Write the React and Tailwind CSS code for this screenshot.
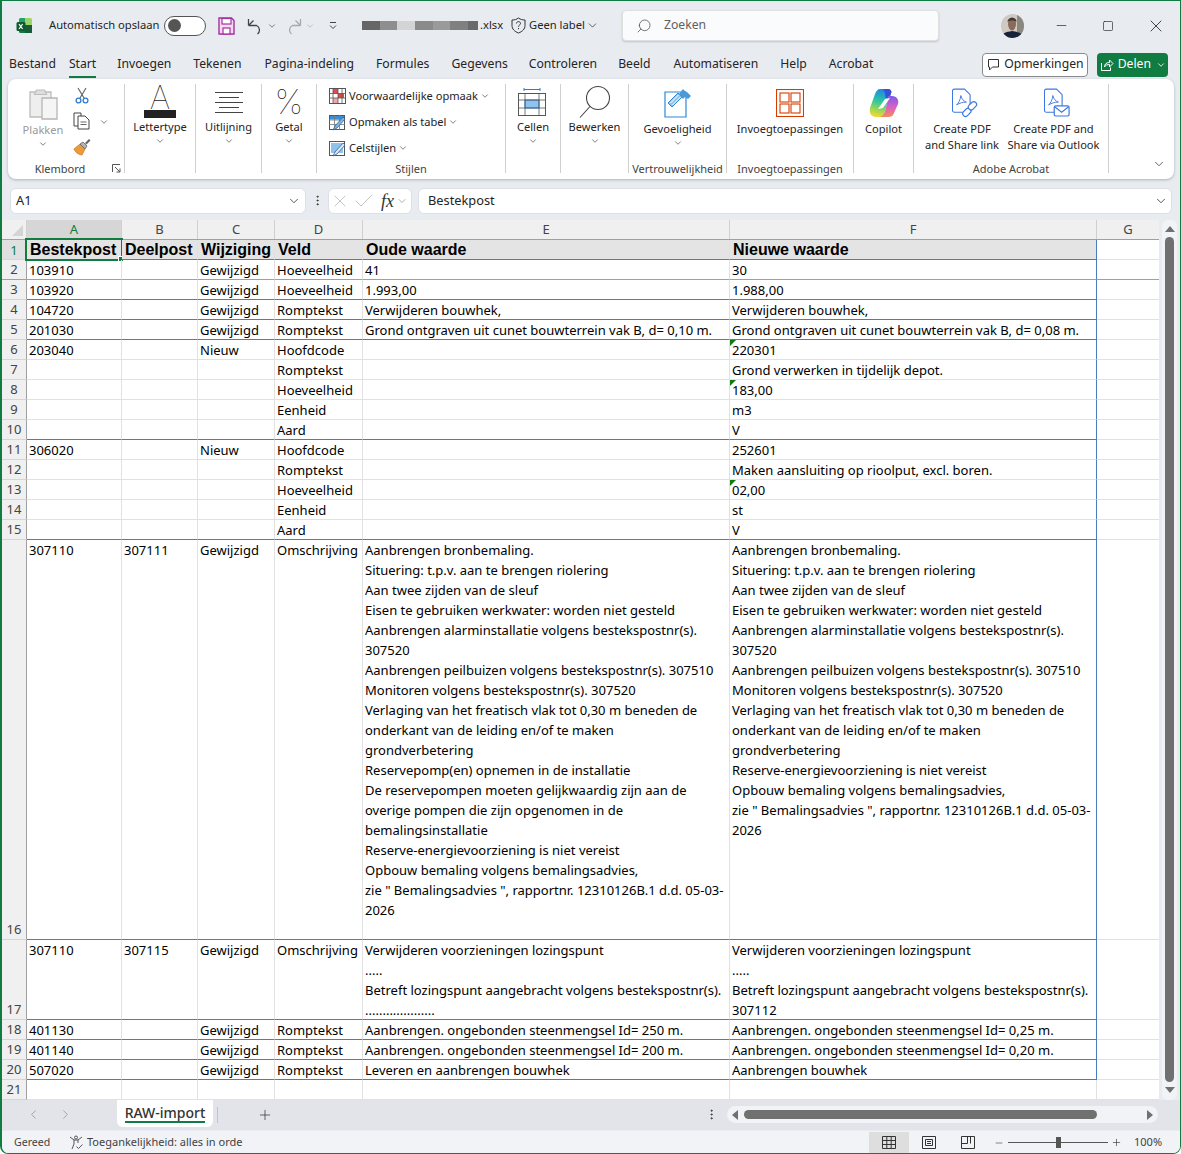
import { ChevronDown, ChevronLeft, ChevronRight, Minus, Plus, Search, Square, X, Check, MoreVertical } from "lucide-react";

const UI = "font-['Noto_Sans','Open_Sans',sans-serif]";

const colWidths = ["w-[95px]", "w-[76px]", "w-[77px]", "w-[88px]", "w-[367px]", "w-[367px]"];
const colLetters = ["A", "B", "C", "D", "E", "F"];

const lineColors = {
  light: "border-b-[#e1e1e1]",
  blue: "border-b-[#4a7ebb]",
  dark: "border-b-[#a0a0a0]",
};

const oldText = [
  "Aanbrengen bronbemaling.",
  "Situering: t.p.v. aan te brengen riolering",
  "Aan twee zijden van de sleuf",
  "Eisen te gebruiken werkwater: worden niet gesteld",
  "Aanbrengen alarminstallatie volgens bestekspostnr(s).",
  "307520",
  "Aanbrengen peilbuizen volgens bestekspostnr(s). 307510",
  "Monitoren volgens bestekspostnr(s). 307520",
  "Verlaging van het freatisch vlak tot 0,30 m beneden de",
  "onderkant van de leiding en/of te maken",
  "grondverbetering",
  "Reservepomp(en) opnemen in de installatie",
  "De reservepompen moeten gelijkwaardig zijn aan de",
  "overige pompen die zijn opgenomen in de",
  "bemalingsinstallatie",
  "Reserve-energievoorziening is niet vereist",
  "Opbouw bemaling volgens bemalingsadvies,",
  "zie \" Bemalingsadvies \", rapportnr. 12310126B.1 d.d. 05-03-",
  "2026",
];

const newText = [
  ...oldText.slice(0, 11),
  "Reserve-energievoorziening is niet vereist",
  "Opbouw bemaling volgens bemalingsadvies,",
  "zie \" Bemalingsadvies \", rapportnr. 12310126B.1 d.d. 05-03-",
  "2026",
];

const rows = [
  { n: 2, line: "dark", cells: ["103910", "", "Gewijzigd", "Hoeveelheid", "41", "30"] },
  { n: 3, line: "blue", cells: ["103920", "", "Gewijzigd", "Hoeveelheid", "1.993,00", "1.988,00"] },
  { n: 4, line: "blue", cells: ["104720", "", "Gewijzigd", "Romptekst", "Verwijderen bouwhek,", "Verwijderen bouwhek,"] },
  { n: 5, line: "blue", cells: ["201030", "", "Gewijzigd", "Romptekst", "Grond ontgraven uit cunet bouwterrein vak B, d= 0,10 m.", "Grond ontgraven uit cunet bouwterrein vak B, d= 0,08 m."] },
  { n: 6, line: "light", flag: true, cells: ["203040", "", "Nieuw", "Hoofdcode", "", "220301"] },
  { n: 7, line: "light", cells: ["", "", "", "Romptekst", "", "Grond verwerken in tijdelijk depot."] },
  { n: 8, line: "light", flag: true, cells: ["", "", "", "Hoeveelheid", "", "183,00"] },
  { n: 9, line: "light", cells: ["", "", "", "Eenheid", "", "m3"] },
  { n: 10, line: "blue", cells: ["", "", "", "Aard", "", "V"] },
  { n: 11, line: "light", cells: ["306020", "", "Nieuw", "Hoofdcode", "", "252601"] },
  { n: 12, line: "light", cells: ["", "", "", "Romptekst", "", "Maken aansluiting op rioolput, excl. boren."] },
  { n: 13, line: "light", flag: true, cells: ["", "", "", "Hoeveelheid", "", "02,00"] },
  { n: 14, line: "light", cells: ["", "", "", "Eenheid", "", "st"] },
  { n: 15, line: "blue", cells: ["", "", "", "Aard", "", "V"] },
  { n: 16, line: "blue", height: "h-[400px]", cells: ["307110", "307111", "Gewijzigd", "Omschrijving", oldText, newText] },
  {
    n: 17,
    line: "blue",
    height: "h-[80px]",
    cells: [
      "307110",
      "307115",
      "Gewijzigd",
      "Omschrijving",
      ["Verwijderen voorzieningen lozingspunt", ".....", "Betreft lozingspunt aangebracht volgens bestekspostnr(s).", "...................."],
      ["Verwijderen voorzieningen lozingspunt", ".....", "Betreft lozingspunt aangebracht volgens bestekspostnr(s).", "307112"],
    ],
  },
  { n: 18, line: "blue", cells: ["401130", "", "Gewijzigd", "Romptekst", "Aanbrengen. ongebonden steenmengsel Id= 250 m.", "Aanbrengen. ongebonden steenmengsel Id= 0,25 m."] },
  { n: 19, line: "blue", cells: ["401140", "", "Gewijzigd", "Romptekst", "Aanbrengen. ongebonden steenmengsel Id= 200 m.", "Aanbrengen. ongebonden steenmengsel Id= 0,20 m."] },
  { n: 20, line: "blue", cells: ["507020", "", "Gewijzigd", "Romptekst", "Leveren en aanbrengen bouwhek", "Aanbrengen bouwhek"] },
  { n: 21, line: "light", blank: true, cells: ["", "", "", "", "", ""] },
];

const tabs = [
  ["Bestand", "ml-[7px]"],
  ["Start", "ml-[13px]"],
  ["Invoegen", "ml-[21px]"],
  ["Tekenen", "ml-[22px]"],
  ["Pagina-indeling", "ml-[23px]"],
  ["Formules", "ml-[22px]"],
  ["Gegevens", "ml-[22px]"],
  ["Controleren", "ml-[21px]"],
  ["Beeld", "ml-[21px]"],
  ["Automatiseren", "ml-[23px]"],
  ["Help", "ml-[22px]"],
  ["Acrobat", "ml-[22px]"],
];

function Chev({ className = "" }) {
  return <ChevronDown size={10} strokeWidth={1.6} className={"text-[#444] " + className} />;
}

function ExcelLogo() {
  return (
    <svg width="17" height="17" viewBox="0 0 17 17">
      <rect x="3" y="1" width="7" height="8" rx="1.5" fill="#21a366" />
      <rect x="9" y="1" width="7" height="8" rx="1.5" fill="#9bd468" />
      <rect x="3" y="8" width="13" height="8" rx="1.5" fill="#107c41" />
      <rect x="9" y="8" width="7" height="8" fill="#185c37" />
      <rect x="0.5" y="5" width="9" height="9" rx="1.5" fill="#0d5c30" />
      <path d="M3 7.2l3.6 4.8M6.6 7.2L3 12" stroke="#fff" strokeWidth="1.2" />
    </svg>
  );
}

function SaveIcon() {
  return (
    <svg width="17" height="18" viewBox="0 0 17 18">
      <path d="M1 1h12.5L16 3.5V17H1z" fill="#f3dcf0" stroke="#a5309f" strokeWidth="1.4" />
      <rect x="4" y="1.5" width="9" height="5.5" fill="#fff" stroke="#a5309f" strokeWidth="1.2" />
      <rect x="5" y="11" width="7" height="6" fill="#fff" stroke="#a5309f" strokeWidth="1.2" />
    </svg>
  );
}

function UndoIcon({ color, flip }) {
  return (
    <svg width="16" height="18" viewBox="0 0 16 18" className={flip ? "-scale-x-100" : ""}>
      <path d="M1.5 8.5h8a5 5 0 0 1 1 8.5M1.5 2v6.5M1.5 8.5l5-5" fill="none" stroke={color} strokeWidth="1.3" />
    </svg>
  );
}

function LabelShield() {
  return (
    <svg width="17" height="17" viewBox="0 0 17 17" className="ml-[9px]">
      <path d="M8.500 1C6.500 2.500 4.500 3 2 3v5.500c0 3.500 2.500 6 6.500 7.500 4-1.500 6.500-4 6.500-7.500V3c-2.500 0-4.500-.5-6.500-2z" fill="none" stroke="#333" strokeWidth="1" />
      <path d="M6.500 6.500c0-2.500 4-2.500 4 0 0 1.500-2 1.500-2 3.200M8.500 11v1.200" fill="none" stroke="#333" strokeWidth="1" />
    </svg>
  );
}

function CommentIcon() {
  return (
    <svg width="13" height="13" viewBox="0 0 13 13" fill="none" stroke="#333">
      <path d="M1.500 1.500h10v7.500H5.500l-3 3V9h-1z" />
    </svg>
  );
}

function ShareIcon() {
  return (
    <svg width="14" height="14" viewBox="0 0 14 14" fill="none" stroke="#fff">
      <path d="M1.500 5v7.500h9V9.500M4.500 9c0-3 2-4.500 5-4.500V2l3.500 3.500L9.500 9V6.500c-2 0-4 .5-5 2.500z" />
    </svg>
  );
}

function Avatar() {
  return (
    <svg width="23" height="24" viewBox="0 0 23 24">
      <defs>
        <clipPath id="avatar-clip">
          <ellipse cx="11.5" cy="12" rx="11.5" ry="12" />
        </clipPath>
      </defs>
      <g clipPath="url(#avatar-clip)">
        <rect width="23" height="24" fill="#cfc9c2" />
        <rect x="16" width="7" height="24" fill="#8d8781" />
        <path d="M0 24c1-5 5-6 11-7 6 1 11 2 12 7z" fill="#17233a" />
        <ellipse cx="11" cy="10" rx="4" ry="6.5" fill="#8a6a5a" />
        <path d="M6.5 8c0-5 9-6 9 0-2-2-7-2-9 0z" fill="#3f3a36" />
      </g>
    </svg>
  );
}

function PasteIcon() {
  return (
    <svg width="29" height="32" viewBox="0 0 29 32">
      <path d="M1 4h21v25H1z" fill="#eeeeee" stroke="#bdbdbd" strokeWidth="1.3" />
      <path d="M7 4V2h9v2l2 2.5H5z" fill="#dedede" stroke="#bdbdbd" />
      <path d="M13 10h15v21H13z" fill="#f5f5f5" stroke="#b5b5b5" strokeWidth="1.3" />
    </svg>
  );
}

function ScissorsIcon() {
  return (
    <svg width="14" height="17" viewBox="0 0 14 17">
      <path d="M3 1l6 10M11 1L5 11" stroke="#666" strokeWidth="1.2" />
      <circle cx="3.5" cy="13.5" r="2.4" fill="none" stroke="#2b7cd3" strokeWidth="1.3" />
      <circle cx="10.5" cy="13.5" r="2.4" fill="none" stroke="#2b7cd3" strokeWidth="1.3" />
    </svg>
  );
}

function CopyIcon() {
  return (
    <svg width="18" height="18" viewBox="0 0 18 18">
      <path d="M1 1h7v13H1z" fill="#fff" stroke="#444" />
      <path d="M5 4h7l4 4v9H5z" fill="#fff" stroke="#444" />
      <path d="M7.5 10h6M7.5 12.5h6" stroke="#666" />
    </svg>
  );
}

function PainterIcon() {
  return (
    <svg width="18" height="18" viewBox="0 0 18 18">
      <path d="M7 6l5 5-3 6c-3 0-7-3-8-6z" fill="#ed9a38" stroke="#c9741a" strokeWidth="0.7" />
      <path d="M7 6l3-2 4 4-2 3z" fill="#b5b5b5" stroke="#555" strokeWidth="0.7" />
      <path d="M12 5l4-4 1.500 1.500-4 4z" fill="#666" />
    </svg>
  );
}

function AlignIcon() {
  return (
    <svg width="30" height="23" viewBox="0 0 30 23" stroke="#444">
      <path d="M1 1.5h28M5 6.5h20M1 11.5h28M5 16.5h20M1 21.5h28" />
    </svg>
  );
}

function CondFormatIcon() {
  return (
    <svg width="17" height="16" viewBox="0 0 17 16">
      <rect x="0.5" y="0.5" width="16" height="15" fill="#fff" stroke="#555" />
      <rect x="4" y="1" width="5" height="4.5" fill="#e04a4a" />
      <rect x="9" y="5.5" width="6" height="4.5" fill="#e04a4a" />
      <rect x="4" y="10" width="5" height="5" fill="#f4a6a6" />
      <path d="M4 0v16M9 0v16M13 0v16M0 5.5h17M0 10h17" stroke="#555" strokeWidth="0.8" />
    </svg>
  );
}

function TableStyleIcon() {
  return (
    <svg width="17" height="17" viewBox="0 0 17 17">
      <rect x="0.5" y="1.5" width="15" height="14" fill="#fff" stroke="#555" />
      <rect x="1" y="2" width="14" height="3.5" fill="#3c8fd6" />
      <path d="M5.5 1v15M10.5 1v15M0 6h16M0 10.5h16" stroke="#777" strokeWidth="0.8" />
      <path d="M4 16l2-4 8-9 2 2-8 9z" fill="#7fb6e5" stroke="#3a5f86" strokeWidth="0.8" />
    </svg>
  );
}

function CellStyleIcon() {
  return (
    <svg width="17" height="17" viewBox="0 0 17 17">
      <rect x="0.5" y="1.5" width="15" height="14" fill="#fff" stroke="#555" />
      <rect x="2" y="3" width="12" height="10" fill="#8fc3ee" />
      <path d="M4 16l2-4 8-9 2 2-8 9z" fill="#d7e8f7" stroke="#3a5f86" strokeWidth="0.8" />
    </svg>
  );
}

function CellsIcon() {
  return (
    <svg width="29" height="28" viewBox="0 0 29 28">
      <path d="M6 1.5h16M6 0v3M22 0v3" stroke="#2b7cd3" />
      <rect x="0.5" y="5.5" width="27" height="22" fill="#fff" stroke="#555" />
      <rect x="7" y="12" width="14" height="8" fill="#8fc3ee" stroke="#2b7cd3" />
      <path d="M7 5v23M21 5v23M0 12h28M0 20h28" stroke="#555" strokeWidth="0.8" />
    </svg>
  );
}

function MagnifierIcon() {
  return (
    <svg width="34" height="34" viewBox="0 0 34 34" fill="none" stroke="#444" strokeWidth="1.1">
      <circle cx="20" cy="13" r="11.5" />
      <path d="M12 21.5L2 32.5" />
    </svg>
  );
}

function SensitivityIcon() {
  return (
    <svg width="28" height="30" viewBox="0 0 28 30">
      <path d="M1 4h21v25H1z" fill="#fff" stroke="#2b88d8" strokeWidth="1.2" />
      <path d="M4 15L14 5l4 4L8 19z" fill="#8fc3ee" stroke="#2b88d8" />
      <path d="M6.500 15l8-8M8.500 17l8-8" stroke="#fff" />
      <path d="M15 6l4-5 3 3-1 1 2-1 4 4-3 3-3-2-2 2z" fill="#4a9ad8" />
    </svg>
  );
}

function AddinsIcon() {
  return (
    <svg width="28" height="28" viewBox="0 0 28 28" fill="none" stroke="#d83b01" strokeWidth="1.1">
      <rect x="0.5" y="0.5" width="27" height="27" />
      <rect x="4" y="4" width="9" height="9" />
      <rect x="15" y="4" width="9" height="9" />
      <rect x="4" y="15" width="9" height="9" />
      <rect x="15" y="15" width="9" height="9" />
    </svg>
  );
}

function CopilotIcon() {
  return (
    <svg width="30" height="30" viewBox="0 0 30 30">
      <defs>
        <linearGradient id="cop-a" x1="0.6" y1="0" x2="0.4" y2="1">
          <stop offset="0" stopColor="#1a86e8" />
          <stop offset="0.45" stopColor="#2fc7a0" />
          <stop offset="0.8" stopColor="#a8d84a" />
          <stop offset="1" stopColor="#f5d63a" />
        </linearGradient>
        <linearGradient id="cop-b" x1="0.5" y1="0" x2="0.5" y2="1">
          <stop offset="0" stopColor="#7a5ce6" />
          <stop offset="0.5" stopColor="#d65ec8" />
          <stop offset="1" stopColor="#f58a5a" />
        </linearGradient>
      </defs>
      <path d="M11 1h8c2 0 3 1 3.500 3L18 16l-4 13H7C2 29 0 25 1 20L6 6c1-3 3-5 5-5z" fill="url(#cop-a)" />
      <path d="M14 1h5c2 0 3 1 3.500 3l-2 6h-4c0-4-1-7-2.500-9z" fill="#3a4fd8" />
      <path d="M19 8h4c5 0 7 4 6 8l-4 9c-1 3-3 4-6 4h-8c3-1 4-3 5-6l2-7z" fill="url(#cop-b)" />
      <path d="M9 21l5-1 7-10-5 1z" fill="#fff" />
    </svg>
  );
}

function PdfDoc() {
  return (
    <>
      <path d="M2.5 1h11l6 6v17c0 1-1 2-2 2h-15c-1 0-2-1-2-2V3c0-1 1-2 2-2z" fill="#fff" stroke="#3f78e0" strokeWidth="1.2" />
      <path d="M5 18c2-2 4-5 4.500-10 1 4 3 6 6 7-4 0-7 1-10.500 3z" fill="none" stroke="#3f78e0" />
    </>
  );
}

function PdfLinkIcon() {
  return (
    <svg width="26" height="30" viewBox="0 0 28 32">
      <PdfDoc />
      <g fill="#fff" stroke="#3f78e0" strokeWidth="1.3">
        <rect x="11" y="23" width="10" height="6" rx="3" transform="rotate(-45 16 26)" />
        <rect x="17" y="16" width="10" height="6" rx="3" transform="rotate(-45 22 19)" />
      </g>
    </svg>
  );
}

function PdfMailIcon() {
  return (
    <svg width="26" height="30" viewBox="0 0 28 32">
      <PdfDoc />
      <rect x="11" y="19" width="16" height="11" rx="1.5" fill="#fff" stroke="#3f78e0" strokeWidth="1.3" />
      <path d="M11.500 20l7.500 6 7.500-6" fill="none" stroke="#3f78e0" strokeWidth="1.2" />
    </svg>
  );
}

function BigButton({ icon, label, chevron, iconBox = "h-[36px]", muted }) {
  return (
    <div className="flex flex-col items-center">
      <div className={"flex items-center justify-center " + iconBox}>{icon}</div>
      <div className={"text-[11.1px] leading-[14px] whitespace-nowrap " + (muted ? "text-[#9a9a9a]" : "text-[#242424]")}>{label}</div>
      {chevron && <Chev className="mt-[2px]" />}
    </div>
  );
}

function Group({ width, label, children, center = true, last }) {
  return (
    <div className={"flex flex-col h-[89px] shrink-0 " + width + (last ? "" : " border-r border-r-[#d0d0d0]")}>
      <div className={"flex-1 flex " + (center ? "justify-center" : "")}>{children}</div>
      <div className="h-[14px] -mb-[3px] text-[11px] leading-[14px] text-center text-[#424242] whitespace-nowrap">{label}</div>
    </div>
  );
}

function StyleRow({ icon, label }) {
  return (
    <div className="flex items-center h-[26px]">
      <div className="w-[20px] flex">{icon}</div>
      <span className="text-[11.1px] text-[#242424] whitespace-nowrap">{label}</span>
      <Chev className="ml-[2px]" />
    </div>
  );
}

function Ribbon() {
  return (
    <div className="flex mx-[6px] h-[100px] pt-[5px] bg-white rounded-lg shadow-[0_1px_3px_rgba(0,0,0,0.25)] shrink-0">
      <div className="flex flex-col h-[89px] w-[117px] shrink-0 border-r border-r-[#d0d0d0]">
        <div className="flex-1 flex">
          <div className="ml-[13px] w-[44px]">
            <BigButton muted chevron icon={<PasteIcon />} label="Plakken" iconBox="h-[39px]" />
          </div>
          <div className="ml-[8px] mt-[3px] flex flex-col items-center w-[18px] gap-[8px]">
            <ScissorsIcon />
            <CopyIcon />
            <PainterIcon />
          </div>
          <Chev className="ml-[8px] mt-[33px]" />
        </div>
        <div className="flex h-[14px] -mb-[3px]">
          <span className="w-[104px] text-[11px] leading-[14px] text-center text-[#424242]">Klembord</span>
          <svg width="9" height="9" viewBox="0 0 9 9" className="mt-[2px]" fill="none" stroke="#555">
            <path d="M.5 8V.5H8M3 3l5 5M8 4.500V8H4.500" />
          </svg>
        </div>
      </div>
      <Group width="w-[71px]">
        <BigButton
          chevron
          label="Lettertype"
          icon={
            <div className="flex flex-col items-center w-[32px]">
              <span className="font-['Inter'] font-thin text-[32px] leading-[24px] text-[#222]">A</span>
              <div className="w-[32px] h-[8px] bg-[#222]" />
            </div>
          }
        />
      </Group>
      <Group width="w-[66px]">
        <BigButton chevron label="Uitlijning" icon={<AlignIcon />} />
      </Group>
      <Group width="w-[55px]">
        <BigButton chevron label="Getal" icon={<span className="font-['Inter'] font-thin text-[34px] leading-[28px] text-[#222]">%</span>} />
      </Group>
      <Group width="w-[189px]" label="Stijlen" center={false}>
        <div className="ml-[12px] -mt-[1px]">
          <StyleRow icon={<CondFormatIcon />} label="Voorwaardelijke opmaak" />
          <StyleRow icon={<TableStyleIcon />} label="Opmaken als tabel" />
          <StyleRow icon={<CellStyleIcon />} label="Celstijlen" />
        </div>
      </Group>
      <Group width="w-[55px]">
        <BigButton chevron label="Cellen" icon={<CellsIcon />} />
      </Group>
      <Group width="w-[68px]">
        <BigButton chevron label="Bewerken" icon={<MagnifierIcon />} />
      </Group>
      <Group width="w-[98px]" label="Vertrouwelijkheid">
        <BigButton chevron label="Gevoeligheid" iconBox="h-[38px]" icon={<SensitivityIcon />} />
      </Group>
      <Group width="w-[127px]" label="Invoegtoepassingen">
        <BigButton label="Invoegtoepassingen" iconBox="h-[38px]" icon={<AddinsIcon />} />
      </Group>
      <Group width="w-[60px]">
        <BigButton label="Copilot" iconBox="h-[38px]" icon={<CopilotIcon />} />
      </Group>
      <Group width="w-[195px]" label="Adobe Acrobat" center={false}>
        <div className="ml-[10px] w-[76px] flex flex-col items-center">
          <div className="h-[37px] flex items-center pl-[6px]"><PdfLinkIcon /></div>
          <div className="text-[11.1px] leading-[16px] text-[#242424] text-center whitespace-nowrap">Create PDF<br />and Share link</div>
        </div>
        <div className="ml-[6px] w-[95px] flex flex-col items-center">
          <div className="h-[37px] flex items-center pl-[6px]"><PdfMailIcon /></div>
          <div className="text-[11.1px] leading-[16px] text-[#242424] text-center whitespace-nowrap">Create PDF and<br />Share via Outlook</div>
        </div>
      </Group>
      <div className="flex-1 flex justify-end items-end pr-[8px] pb-[8px]">
        <ChevronDown size={14} strokeWidth={1.3} className="text-[#333]" />
      </div>
    </div>
  );
}

function TitleBar() {
  const blur = [
    ["w-[18px]", "bg-[#666666]"],
    ["w-[17px]", "bg-[#8e8e8e]"],
    ["w-[18px]", "bg-[#d2d4d6]"],
    ["w-[18px]", "bg-[#8a8a8a]"],
    ["w-[17px]", "bg-[#9a9a9a]"],
    ["w-[18px]", "bg-[#808080]"],
    ["w-[10px]", "bg-[#6a6a6a]"],
  ];

  return (
    <div className="flex items-center h-[49px] shrink-0 text-[#242424]">
      <div className="ml-[14px]"><ExcelLogo /></div>
      <span className="ml-[16px] text-[11.2px] whitespace-nowrap w-[108px]">Automatisch opslaan</span>
      <div className="ml-[7px] w-[42px] h-[20px] rounded-full border border-[#555] bg-white flex items-center pl-[3px]">
        <div className="w-[13px] h-[13px] rounded-full bg-[#555]" />
      </div>
      <div className="ml-[12px]"><SaveIcon /></div>
      <div className="ml-[12px]"><UndoIcon color="#444" /></div>
      <Chev className="ml-[4px]" />
      <div className="ml-[9px]"><UndoIcon color="#a8a8a8" flip /></div>
      <ChevronDown size={10} strokeWidth={1.6} className="ml-[3px] text-[#a8a8a8]" />
      <svg width="10" height="10" viewBox="0 0 10 10" className="ml-[13px]" fill="none" stroke="#444">
        <path d="M2 1.500h6M2 4.500l3 3 3-3" />
      </svg>
      <div className="ml-[24px] flex h-[9px]">
        {blur.map((block) => (
          <div key={block[1]} className={block[0] + " " + block[1]} />
        ))}
      </div>
      <span className="ml-[2px] w-[21px] text-[11.2px]">.xlsx</span>
      <LabelShield />
      <span className="ml-[2px] w-[56px] text-[11.2px] whitespace-nowrap">Geen label</span>
      <ChevronDown size={13} strokeWidth={1.4} className="ml-[1px] text-[#333]" />
      <div className="ml-[23px] w-[317px] h-[31px] bg-[#fafbfc] rounded border border-[#e0e0e0] shadow-[0_1px_2px_rgba(0,0,0,0.18)] flex items-center pl-[13px]">
        <Search size={16} strokeWidth={1.2} className="text-[#555] -scale-x-100" />
        <span className="ml-[12px] text-[12.2px] text-[#616161]">Zoeken</span>
      </div>
      <div className="ml-[62px]"><Avatar /></div>
      <Minus size={15} strokeWidth={1.1} className="ml-[30px] text-[#222]" />
      <Square size={12} strokeWidth={1.3} className="ml-[33px] text-[#222]" />
      <X size={20} strokeWidth={1} className="ml-[32px] text-[#222]" />
    </div>
  );
}

function TabRow() {
  return (
    <div className="flex items-center h-[29px] shrink-0 text-[12.2px] text-[#242424]">
      {tabs.map(([name, gap]) => (
        <div key={name} className={"relative whitespace-nowrap " + gap}>
          {name}
          {name === "Start" && <div className="absolute left-0 right-0 -bottom-[4px] h-[2px] bg-[#107c41]" />}
        </div>
      ))}
      <div className="ml-[109px] w-[106px] h-[24px] rounded border border-[#8a8a8a] bg-white flex items-center justify-center">
        <CommentIcon />
        <span className="ml-[4px]">Opmerkingen</span>
      </div>
      <div className="ml-[9px] w-[71px] h-[24px] rounded bg-[#107c41] text-white flex items-center justify-center">
        <ShareIcon />
        <span className="ml-[4px]">Delen</span>
        <ChevronDown size={10} strokeWidth={2} className="ml-[5px]" />
      </div>
    </div>
  );
}

function FormulaBar() {
  return (
    <div className="flex items-center h-[27px] mt-[8px] ml-[8px] shrink-0 text-[12.8px] text-[#242424]">
      <div className="w-[296px] h-[26px] bg-white rounded-md border border-[#dcdfe3] flex items-center justify-between pl-[5px] pr-[4px]">
        <span>A1</span>
        <ChevronDown size={14} strokeWidth={1.3} />
      </div>
      <MoreVertical size={13} strokeWidth={1.8} className="ml-[5px] text-[#333]" />
      <div className="ml-[4px] w-[84px] h-[26px] bg-white rounded-md border border-[#dcdfe3] flex items-center pl-[1px]">
        <X size={20} strokeWidth={0.9} className="text-[#b4b4b4]" />
        <Check size={24} strokeWidth={0.8} className="ml-[2px] text-[#b4b4b4]" />
        <span className="ml-[5px] font-['Liberation_Serif'] italic text-[18px] leading-none text-[#333]">fx</span>
        <ChevronDown size={12} strokeWidth={1.2} className="ml-[2px] text-[#777]" />
      </div>
      <div className="ml-[6px] w-[754px] h-[26px] bg-white rounded-md border border-[#dcdfe3] flex items-center justify-between pl-[9px] pr-[3px]">
        <span>Bestekpost</span>
        <ChevronDown size={14} strokeWidth={1.3} />
      </div>
    </div>
  );
}

function CellText({ value }) {
  if (Array.isArray(value)) {
    return value.map((line, index) => (
      <div key={index} className="h-[20px]">{line}</div>
    ));
  }
  return value;
}

function SheetRow({ row }) {
  const line = lineColors[row.line];
  const gridLine = row.line === "dark" ? lineColors.dark : lineColors.light;
  const height = row.height || "h-[20px]";

  return (
    <div className={"flex " + height}>
      <div className={"w-[25px] shrink-0 bg-[#f0f0f0] border-r border-r-[#a0a0a0] border-b flex items-end justify-center leading-[20px] text-[#444] " + (row.line === "dark" ? lineColors.dark : "border-b-[#d6d6d6]")}>
        {row.n}
      </div>
      {row.cells.map((cell, index) => (
        <div
          key={index}
          className={
            "relative shrink-0 border-b border-r px-[2px] leading-[20px] whitespace-nowrap " +
            colWidths[index] + " " +
            (row.blank ? lineColors.light : line) + " " +
            (index === 5 && !row.blank ? "border-r-[#4a7ebb]" : "border-r-[#e1e1e1]")
          }
        >
          {index === 5 && row.flag && (
            <div className="absolute left-0 top-0 w-0 h-0 border-t-[6px] border-t-[#107c10] border-r-[6px] border-r-transparent" />
          )}
          <CellText value={cell} />
        </div>
      ))}
      <div className={"w-[62px] shrink-0 border-b " + gridLine} />
    </div>
  );
}

function Sheet() {
  const headers = ["Bestekpost", "Deelpost", "Wijziging", "Veld", "Oude waarde", "Nieuwe waarde"];

  return (
    <div className="flex mt-[6px] h-[880px] shrink-0">
      <div className="w-[1157px] shrink-0 bg-white text-[13px] text-black font-['Noto_Sans','Open_Sans',sans-serif]">
        <div className="flex h-[20px] bg-[#f0f0f0] border-b border-b-[#a0a0a0] text-[#444]">
          <div className="w-[25px] shrink-0 border-r border-r-[#d0d0d0] flex items-end justify-end pr-[3px] pb-[3px]">
            <div className="w-0 h-0 border-b-[11px] border-b-[#d4d4d4] border-l-[11px] border-l-transparent" />
          </div>
          {colLetters.map((letter, index) => (
            <div
              key={letter}
              className={
                "shrink-0 border-r border-r-[#d0d0d0] text-center leading-[19px] " +
                colWidths[index] +
                (letter === "A" ? " bg-[#d6d6d6] text-[#107c41]" : "")
              }
            >
              {letter}
            </div>
          ))}
          <div className="w-[62px] shrink-0 text-center leading-[19px]">G</div>
        </div>

        <div className="flex h-[20px]">
          <div className="w-[25px] shrink-0 bg-[#e0e0e0] border-r border-r-[#a0a0a0] border-b border-b-[#d6d6d6] text-center leading-[20px] text-[#107c41]">1</div>
          {headers.map((name, index) => (
            <div
              key={name}
              className={
                "relative shrink-0 bg-[#e4e4e4] border-b border-b-[#4a7ebb] border-r pl-[3px] font-['Liberation_Sans'] font-bold text-[16px] leading-[20px] whitespace-nowrap " +
                colWidths[index] + " " +
                (index === 5 ? "border-r-[#4a7ebb]" : "border-r-[#e1e1e1]")
              }
            >
              {name}
              {index === 0 && (
                <div className="absolute -left-[2px] -top-[2px] w-[98px] h-[23px] border-2 border-[#107c41]">
                  <div className="absolute -right-[3px] -bottom-[3px] w-[6px] h-[6px] bg-[#107c41] border border-white" />
                </div>
              )}
            </div>
          ))}
          <div className="w-[62px] shrink-0 border-b border-b-[#e1e1e1]" />
        </div>

        {rows.map((row) => (
          <SheetRow key={row.n} row={row} />
        ))}
      </div>

      <div className="ml-[3px] w-[15px] h-[880px] bg-[#f1f3f6] rounded-md flex flex-col items-center">
        <div className="mt-[6px] w-0 h-0 border-x-[5px] border-x-transparent border-b-[6px] border-b-[#707070]" />
        <div className="mt-[5px] w-[9px] h-[845px] bg-[#707070] rounded-full" />
        <div className="mt-[5px] w-0 h-0 border-x-[5px] border-x-transparent border-t-[6px] border-t-[#707070]" />
      </div>
    </div>
  );
}

function SheetTabs() {
  return (
    <div className="flex h-[30px] shrink-0 bg-[#e2e4ea] text-[#444]">
      <ChevronLeft size={15} strokeWidth={1.2} className="ml-[24px] mt-[7px] text-[#8f8f8f]" />
      <ChevronRight size={15} strokeWidth={1.2} className="ml-[17px] mt-[7px] text-[#8f8f8f]" />
      <div className="ml-[44px] w-[96px] h-[27px] bg-white rounded-b-md relative flex justify-center">
        <span className="text-[14px] font-medium leading-[25px] text-[#333]">RAW-import</span>
        <div className="absolute left-[8px] right-[8px] bottom-[4px] h-[2px] bg-[#107c41]" />
      </div>
      <div className="ml-[4px] mt-[7px] w-px h-[16px] bg-[#c4c4c4]" />
      <Plus size={16} strokeWidth={1.1} className="ml-[39px] mt-[7px] text-[#333]" />
      <MoreVertical size={13} strokeWidth={1.8} className="ml-[432px] mt-[8px] text-[#333]" />
      <div className="ml-[9px] mt-[6px] w-[431px] h-[17px] bg-[#f1f3f6] rounded-full flex items-center pl-[5px]">
        <div className="w-0 h-0 border-y-[5px] border-y-transparent border-r-[6px] border-r-[#707070]" />
        <div className="ml-[6px] w-[353px] h-[9px] bg-[#707070] rounded-full" />
        <div className="ml-[50px] w-0 h-0 border-y-[5px] border-y-transparent border-l-[6px] border-l-[#707070]" />
      </div>
    </div>
  );
}

function StatusBar() {
  return (
    <div className="flex items-center h-[23px] mt-px shrink-0 bg-[#f1f3f6] text-[11px] text-[#424242]">
      <span className="ml-[12px] w-[36px] text-[10.6px]">Gereed</span>
      <svg width="16" height="16" viewBox="0 0 16 16" className="ml-[19px]" fill="none" stroke="#444" strokeWidth="0.9">
        <circle cx="7" cy="2.500" r="1.500" />
        <path d="M1 2l4 3h4l4-3M5 5v4l-2 5M9 5v3M7.500 11.500l2 2 4-4" />
      </svg>
      <span className="ml-[2px] w-[158px] whitespace-nowrap">Toegankelijkheid: alles in orde</span>
      <div className="ml-[624px] w-[40px] h-[22px] bg-[#dedede] flex items-center justify-center">
        <svg width="14" height="13" viewBox="0 0 14 13" fill="none" stroke="#333">
          <path d="M.5.500h13v12H.5zM.5 4.500h13M.5 8.500h13M4.800.500v12M9.200.500v12" />
        </svg>
      </div>
      <svg width="14" height="13" viewBox="0 0 14 13" className="ml-[13px]" fill="none" stroke="#333">
        <path d="M.5.500h13v12H.5zM3.500 3.500h7v6h-7zM5 5.500h4M5 7.500h4" />
      </svg>
      <svg width="14" height="13" viewBox="0 0 14 13" className="ml-[25px]" fill="none" stroke="#333">
        <path d="M.5.500h13v12H.5zM.5 7.500h6v-7M6.500 .500h3v7" />
      </svg>
      <Minus size={10} strokeWidth={1.4} className="ml-[19px] text-[#333]" />
      <div className="ml-[4px] relative w-[100px] h-px bg-[#555]">
        <div className="absolute left-[48px] -top-[5px] w-[5px] h-[11px] bg-[#555]" />
      </div>
      <Plus size={11} strokeWidth={1.4} className="ml-[3px] text-[#333]" />
      <span className="ml-[12px]">100%</span>
    </div>
  );
}

export default function App() {
  return (
    <div className={"w-[1181px] h-[1154px] flex flex-col overflow-hidden bg-[#e8ecf1] border border-[#107c41] border-l-2 rounded-b-lg " + UI}>
      <TitleBar />
      <TabRow />
      <Ribbon />
      <FormulaBar />
      <Sheet />
      <SheetTabs />
      <StatusBar />
    </div>
  );
}
